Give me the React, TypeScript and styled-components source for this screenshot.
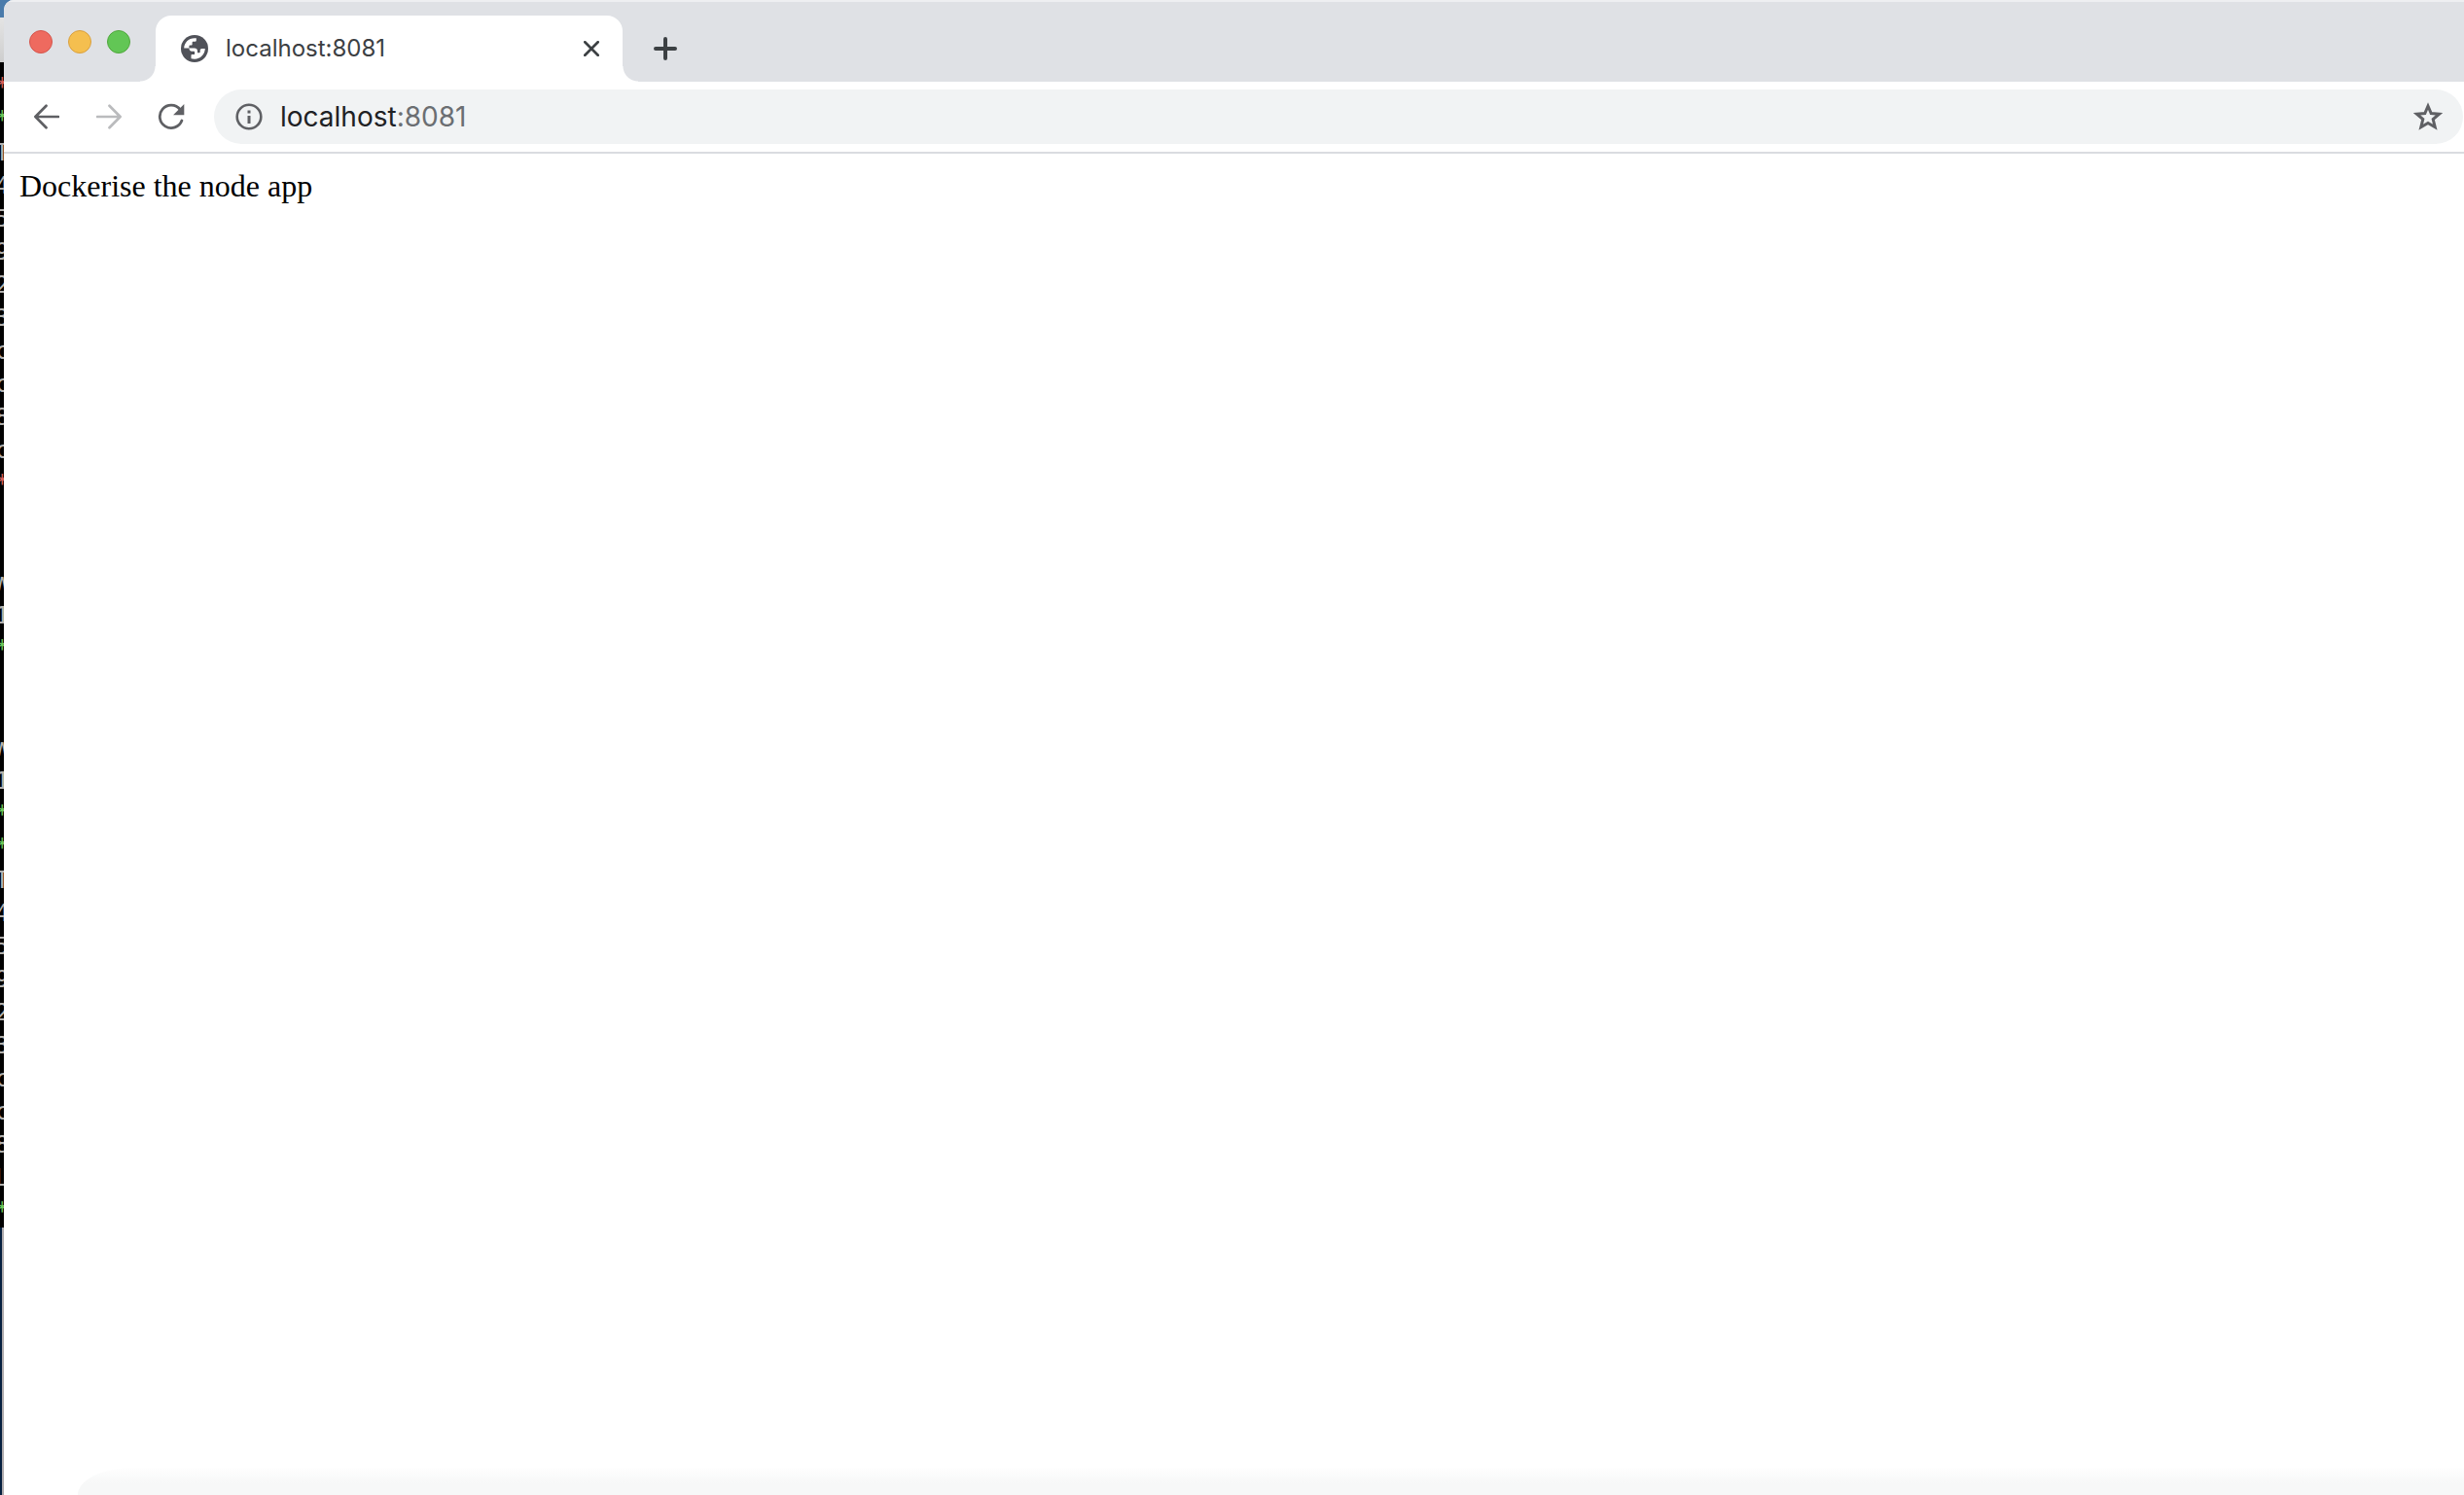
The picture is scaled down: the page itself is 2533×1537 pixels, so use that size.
import React from "react";
import styled, { createGlobalStyle } from "styled-components";

const GlobalStyle = createGlobalStyle`
  *, *::before, *::after { box-sizing: border-box; }
  body { margin: 0; background: #fff; }
  button, input { font: inherit; border: 0; padding: 0; background: none; }
`;

const uiFont = `Inter, Roboto, "Liberation Sans", sans-serif`;

const Desktop = styled.div`
  display: flex;
  min-height: 100vh;
  overflow: hidden;
  background: linear-gradient(#4a7bab 0 32px, #010102 32px);
`;

const Behind = styled.div`
  flex: 0 0 4px;
  width: 4px;
  display: flex;
  flex-direction: column;
  overflow: hidden;
`;

const Sky = styled.div`
  height: 18px;
  background: #4a7bab;
`;

const TerminalTitle = styled.div`
  height: 46px;
  background: linear-gradient(#e4e4e4, #cecece);
`;

const Terminal = styled.div`
  padding-top: 8px;
  display: grid;
  grid-auto-rows: 34px;
  background: #010101;
  font: 24px "DejaVu Sans Mono", "Liberation Mono", monospace;
`;

const TerminalLine = styled.span<{ $tone: string }>`
  width: 14px;
  margin-left: -5px;
  line-height: 34px;
  color: ${(p) => p.$tone};
`;

const Sea = styled.div`
  flex: 1;
  border-right: 2px solid #aeaaac;
  background: #06203f;
`;

const Window = styled.div`
  flex: 1;
  min-width: 0;
  display: flex;
  flex-direction: column;
  overflow: hidden;
  border-top-left-radius: 10px;
  background: #fff;
`;

const TabStrip = styled.div`
  height: 84px;
  padding: 14px 0 0 26px;
  display: flex;
  background: #dfe1e5;
  border-top: 2px solid #eeeff1;
`;

const Lights = styled.div`
  display: flex;
  gap: 16px;
  width: 130px;
  padding-top: 15px;
`;

const Light = styled.button<{ $fill: string; $edge: string }>`
  width: 24px;
  height: 24px;
  border-radius: 50%;
  background: ${(p) => p.$fill};
  border: 1px solid ${(p) => p.$edge};
`;

const Tab = styled.div`
  position: relative;
  width: 480px;
  height: 68px;
  padding: 0 20px 0 26px;
  display: flex;
  align-items: center;
  border-radius: 16px 16px 0 0;
  background: #fff;

  &::before,
  &::after {
    content: "";
    position: absolute;
    bottom: 0;
    width: 16px;
    height: 16px;
  }
  &::before {
    right: 100%;
    background: radial-gradient(circle at 0 0, transparent 15px, #fff 16px);
  }
  &::after {
    left: 100%;
    background: radial-gradient(circle at 100% 0, transparent 15px, #fff 16px);
  }
`;

const TabTitle = styled.span`
  flex: 1;
  margin-left: 18px;
  font: 24px/28px ${uiFont};
  color: #3c4043;
`;

const IconButton = styled.button<{ $size: number; $color: string }>`
  width: ${(p) => p.$size}px;
  height: ${(p) => p.$size}px;
  display: flex;
  align-items: center;
  justify-content: center;
  flex: none;
  color: ${(p) => p.$color};
`;

const NewTab = styled(IconButton)`
  margin: 18px 0 0 28px;
`;

const Toolbar = styled.div`
  height: 74px;
  padding: 8px 1px 8px 24px;
  display: flex;
  align-items: center;
  background: #fff;
  border-bottom: 2px solid #dadce0;
`;

const Nav = styled.nav`
  display: flex;
  gap: 24px;
  width: 192px;
`;

const Omnibox = styled.div`
  flex: 1;
  height: 56px;
  padding: 0 16px;
  display: flex;
  align-items: center;
  border-radius: 28px;
  background: #f1f3f4;
  font: 28px/36px ${uiFont};
`;

const Address = styled.a`
  flex: 1;
  margin-left: 12px;
  color: #202124;
  text-decoration: none;
`;

const Port = styled.span`
  color: #6b6e72;
`;

const Page = styled.main`
  flex: 1;
  padding: 16px;
  font: 32px/34px "Liberation Serif", "Times New Roman", serif;
  color: #000;
`;

const Dock = styled.div`
  height: 28px;
  margin-left: 76px;
  border-top-left-radius: 56px 28px;
  background: linear-gradient(#fefefe, #f7f8f8 16px);
`;

const gray = "#b3b2b0";
const red = "#d8605a";
const green = "#6cc95a";

const lines: [string, string][] = [
  ["*", red], ["*", green], ["T", gray], ["4", gray], ["5", gray], ["9", gray],
  ["2", gray], ["3", gray], ["c", gray], ["c", gray], ["8", gray], ["c", gray],
  ["*", red], ["", gray], ["", gray], ["W", gray], ["1", gray], ["*", green],
  ["", gray], ["", gray], ["W", gray], ["1", gray], ["*", green], ["*", green],
  ["T", gray], ["4", gray], ["5", gray], ["9", gray], ["2", gray], ["3", gray],
  ["c", gray], ["c", gray], ["8", gray], ["L", gray], ["*", green],
];

const GlobeIcon = () => (
  <svg width="28" height="28" viewBox="0 0 28 28" aria-hidden="true">
    <circle cx="14" cy="14" r="14" fill="#505259" />
    <path
      fill="#fff"
      d="M3.200 13.600C3.200 8 7.800 3.200 14 3.200h1.800v2.300c0 .8-.4 1.200-1.200 1.200h-1.800c-.8 0-1.200.5-1.200 1.200v1.600c0 .7-.4 1.100-1 1.100H9.300c-.6 0-.9.400-.9 1v1.900zM8.400 13.600h5.400c2 0 3.200 1.200 3.200 3v1.600h1.700c.7 0 1-.4 1-1v-1.300c0-1.200.8-1.900 2-1.900h3.100C24.500 20 20 24.700 14 24.700c-1.300 0-2.400-.2-3.500-.5v-3.100c0-.7.3-1 1-1h1.700c.6 0 .9-.3.9-.9v-1.400c0-.6-.4-1-1-1h-1.900c-1.800 0-2.800-1.200-2.800-3.200z"
    />
  </svg>
);

const CloseIcon = () => (
  <svg width="16" height="16" viewBox="0 0 16 16" aria-hidden="true">
    <path d="M1.300 1.300l13.400 13.400M14.700 1.300L1.300 14.700" stroke="currentColor" strokeWidth="2.700" strokeLinecap="round" />
  </svg>
);

const PlusIcon = () => (
  <svg width="24" height="24" viewBox="0 0 24 24" aria-hidden="true">
    <path d="M12 2v20M2 12h20" stroke="currentColor" strokeWidth="4" strokeLinecap="round" />
  </svg>
);

const ArrowIcon = ({ forward = false }: { forward?: boolean }) => (
  <svg width="26" height="26" viewBox="0 0 26 26" aria-hidden="true">
    <path
      d={forward ? "M1 13h23M13.500 1.800L24.600 13L13.500 24.200" : "M25 13H2M12.500 1.800L1.400 13L12.500 24.200"}
      fill="none"
      stroke="currentColor"
      strokeWidth="2.700"
      strokeLinecap="round"
      strokeLinejoin="round"
    />
  </svg>
);

const ReloadIcon = () => (
  <svg width="28" height="28" viewBox="0 0 28 28" aria-hidden="true">
    <path d="M23.100 6.500A11.700 11.700 0 1 0 24.900 18" fill="none" stroke="currentColor" strokeWidth="2.800" strokeLinecap="round" />
    <path d="M27.300 1v11.200H16.100z" fill="currentColor" />
  </svg>
);

const InfoIcon = () => (
  <svg width="28" height="28" viewBox="0 0 28 28" aria-hidden="true">
    <circle cx="14" cy="14" r="12.300" fill="none" stroke="currentColor" strokeWidth="2.600" />
    <path d="M12.500 7.500h3v3h-3zM12.500 13h3v8h-3z" fill="currentColor" />
  </svg>
);

const StarIcon = () => (
  <svg width="30" height="30" viewBox="0 0 30 30" aria-hidden="true">
    <path
      d="M15 4L18.200 11.600L26.500 12.200L20.200 17.600L22.200 25.700L15 21.400L7.800 25.700L9.800 17.600L3.500 12.200L11.800 11.600z"
      fill="none"
      stroke="currentColor"
      strokeWidth="3"
    />
  </svg>
);

export default function App() {
  return (
    <>
      <GlobalStyle />
      <Desktop>
        <Behind aria-hidden="true">
          <Sky />
          <TerminalTitle />
          <Terminal>
            {lines.map(([text, tone], i) => (
              <TerminalLine key={i} $tone={tone}>{text}</TerminalLine>
            ))}
          </Terminal>
          <Sea />
        </Behind>
        <Window>
          <TabStrip>
            <Lights>
              <Light aria-label="Close window" $fill="#ee6a5f" $edge="#d5554c" />
              <Light aria-label="Minimise window" $fill="#f5bf4f" $edge="#d9a040" />
              <Light aria-label="Zoom window" $fill="#62c655" $edge="#51a73e" />
            </Lights>
            <Tab>
              <GlobeIcon />
              <TabTitle>localhost:8081</TabTitle>
              <IconButton aria-label="Close tab" $size={24} $color="#3c4043"><CloseIcon /></IconButton>
            </Tab>
            <NewTab aria-label="New tab" $size={32} $color="#3c4043"><PlusIcon /></NewTab>
          </TabStrip>
          <Toolbar>
            <Nav>
              <IconButton aria-label="Back" $size={40} $color="#5f6064"><ArrowIcon /></IconButton>
              <IconButton aria-label="Forward" $size={40} $color="#babbbd"><ArrowIcon forward /></IconButton>
              <IconButton aria-label="Reload" $size={40} $color="#5f6064"><ReloadIcon /></IconButton>
            </Nav>
            <Omnibox>
              <IconButton aria-label="Site information" $size={40} $color="#5f6064"><InfoIcon /></IconButton>
              <Address href="http://localhost:8081">localhost<Port>:8081</Port></Address>
              <IconButton aria-label="Bookmark this page" $size={40} $color="#5f6064"><StarIcon /></IconButton>
            </Omnibox>
          </Toolbar>
          <Page>Dockerise the node app</Page>
          <Dock />
        </Window>
      </Desktop>
    </>
  );
}
